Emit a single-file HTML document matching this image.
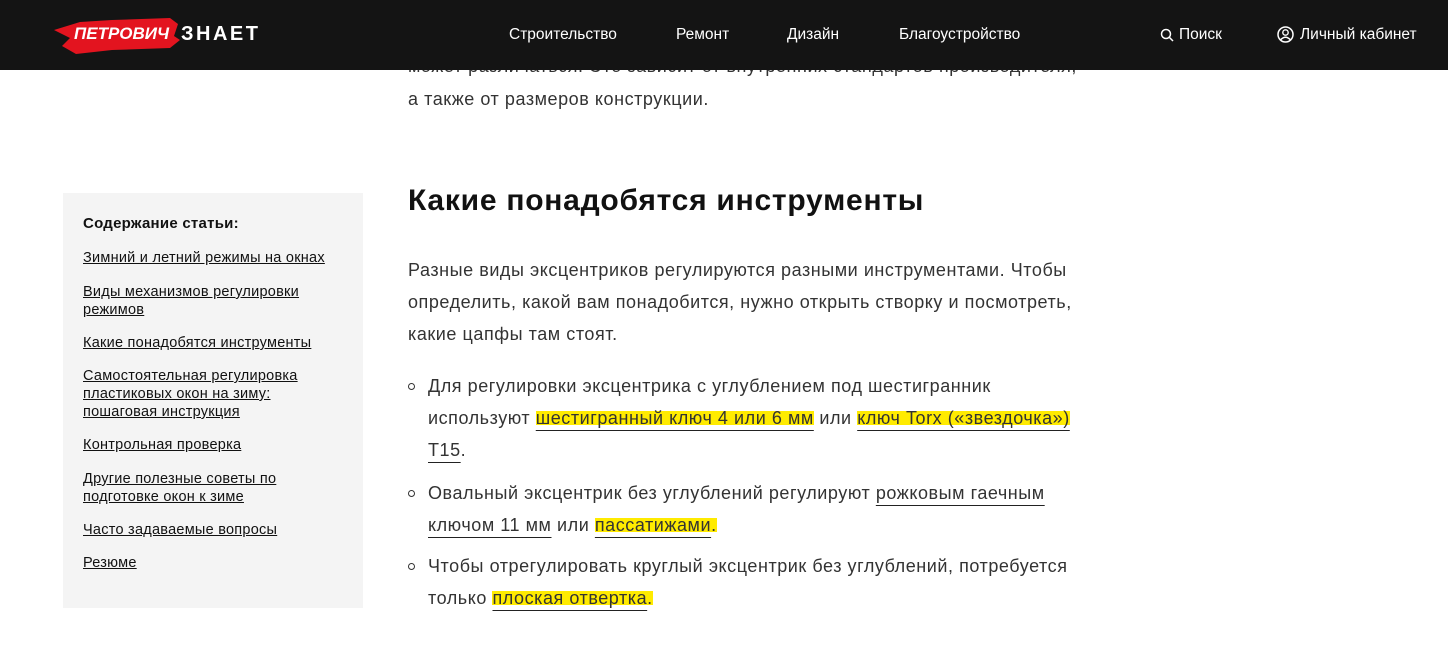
<!DOCTYPE html>
<html><head><meta charset="utf-8"><style>
*{margin:0;padding:0;box-sizing:border-box}
body{width:1448px;height:664px;overflow:hidden;background:#fff;font-family:"Liberation Sans",sans-serif;color:#333;position:relative}
.hdr{position:absolute;top:0;left:0;width:1448px;height:70px;background:#141414;color:#fff;font-size:15.5px}
.hdr span{position:absolute;top:26px;white-space:nowrap}
.t{position:absolute;left:408px;font-size:18px;letter-spacing:0.55px;line-height:32px;white-space:nowrap;color:#333}
.h{position:absolute;left:408px;top:184px;font-size:30px;font-weight:bold;color:#111;letter-spacing:0.75px}
.u{text-decoration:underline;text-decoration-color:#222;text-underline-offset:6px}
.y{background:linear-gradient(transparent 15%,#ffeb00 15%,#ffeb00 85%,transparent 85%)}
.b{position:absolute;left:408px;width:7px;height:7px;border:1.3px solid #333;border-radius:50%}
.side{position:absolute;left:63px;top:193px;width:300px;height:415px;background:#f4f4f4}
.side div{position:absolute;left:20px;font-size:14.5px;letter-spacing:0.25px;line-height:18px;color:#111;text-decoration:underline;white-space:nowrap}
</style></head><body>
<div class="t" style="top:50px">может различаться. Это зависит от внутренних стандартов производителя,</div>
<div class="t" style="top:83px">а также от размеров конструкции.</div>
<div class="hdr">
<svg style="position:absolute;left:52px;top:14px" width="135" height="42"><path d="M2 16 L28 8 L60 6 L118 4 L126 10 L122 22 L128 26 L118 34 L60 36 L24 40 L10 32 L18 24 Z" fill="#e3141f"/></svg>
<span style="left:74px;top:24px;font-style:italic;font-weight:bold;font-size:17px">ПЕТРОВИЧ</span>
<span style="left:181px;top:23px;font-weight:900;font-size:20px;letter-spacing:2.5px">ЗНАЕТ</span>
<span style="left:509px">Строительство</span>
<span style="left:676px">Ремонт</span>
<span style="left:787px">Дизайн</span>
<span style="left:899px">Благоустройство</span>
<svg style="position:absolute;left:1160px;top:28px" width="14" height="14"><circle cx="6" cy="6" r="4.5" fill="none" stroke="#fff" stroke-width="1.5"/><path d="M9.5 9.5 L13 13" stroke="#fff" stroke-width="1.5"/></svg>
<span style="left:1179px">Поиск</span>
<svg style="position:absolute;left:1277px;top:26px" width="17" height="17"><circle cx="8.5" cy="8.5" r="7.5" fill="none" stroke="#fff" stroke-width="1.5"/><circle cx="8.5" cy="6.5" r="2.7" fill="none" stroke="#fff" stroke-width="1.4"/><path d="M3.5 14 Q8.5 8.5 13.5 14" fill="none" stroke="#fff" stroke-width="1.4"/></svg>
<span style="left:1300px">Личный кабинет</span>
</div>
<div class="side">
<div style="top:22px;font-weight:bold;text-decoration:none;font-size:15px">Содержание статьи:</div>
<div style="top:56px">Зимний и летний режимы на окнах</div>
<div style="top:90px">Виды механизмов регулировки<br>режимов</div>
<div style="top:141px">Какие понадобятся инструменты</div>
<div style="top:174px">Самостоятельная регулировка<br>пластиковых окон на зиму:<br>пошаговая инструкция</div>
<div style="top:243px">Контрольная проверка</div>
<div style="top:277px">Другие полезные советы по<br>подготовке окон к зиме</div>
<div style="top:328px">Часто задаваемые вопросы</div>
<div style="top:361px">Резюме</div>
</div>
<div class="h">Какие понадобятся инструменты</div>
<div class="t" style="top:254px">Разные виды эксцентриков регулируются разными инструментами. Чтобы</div>
<div class="t" style="top:286px">определить, какой вам понадобится, нужно открыть створку и посмотреть,</div>
<div class="t" style="top:318px">какие цапфы там стоят.</div>
<div class="b" style="top:383px"></div>
<div class="t" style="left:428px;top:370px">Для регулировки эксцентрика с углублением под шестигранник</div>
<div class="t" style="left:428px;top:402px">используют <span class="y u">шестигранный ключ 4 или 6 мм</span> или <span class="y u">ключ Torx («звездочка»)</span></div>
<div class="t" style="left:428px;top:434px"><span class="u">Т15</span>.</div>
<div class="b" style="top:490px"></div>
<div class="t" style="left:428px;top:477px">Овальный эксцентрик без углублений регулируют <span class="u">рожковым гаечным</span></div>
<div class="t" style="left:428px;top:509px"><span class="u">ключом 11 мм</span> или <span class="y"><span class="u">пассатижами</span>.</span></div>
<div class="b" style="top:563px"></div>
<div class="t" style="left:428px;top:550px">Чтобы отрегулировать круглый эксцентрик без углублений, потребуется</div>
<div class="t" style="left:428px;top:582px">только <span class="y"><span class="u">плоская отвертка</span>. </span></div>
</body></html>
